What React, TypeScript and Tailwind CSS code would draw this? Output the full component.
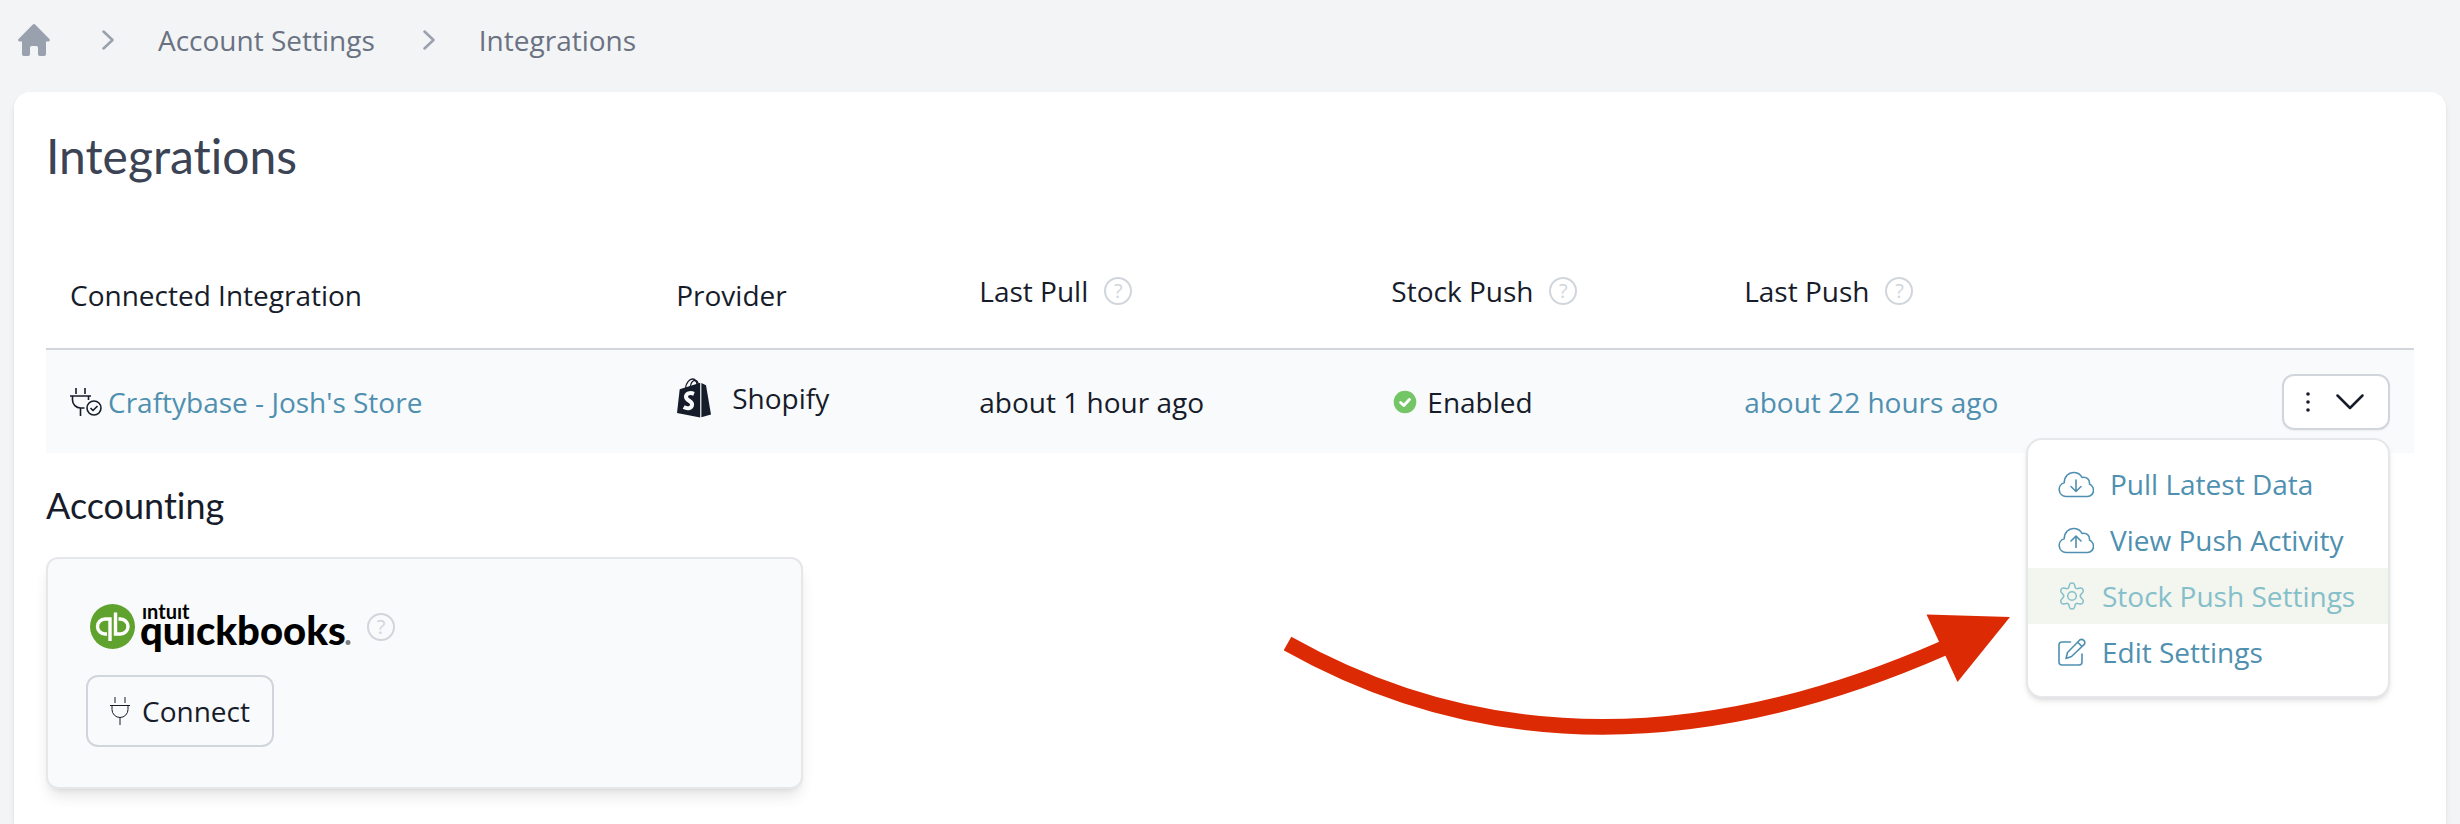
import { useState } from 'react'
import type { ReactNode } from 'react'

const iconProps = {
  fill: 'none',
  stroke: 'currentColor',
  strokeLinecap: 'round' as const,
  strokeLinejoin: 'round' as const,
}

function HomeIcon() {
  return (
    <svg className="h-8 w-8" viewBox="0 0 32 32" fill="currentColor" aria-hidden="true">
      <path d="M14.600.700a2 2 0 0 1 2.800 0l14 14.200a1.500 1.500 0 0 1-1 2.600h-2.400v12.700a1.800 1.800 0 0 1-1.800 1.800h-4.400a1.800 1.800 0 0 1-1.800-1.800V23.500a1.600 1.600 0 0 0-1.600-1.600h-4.800a1.600 1.600 0 0 0-1.600 1.600v6.700a1.800 1.800 0 0 1-1.800 1.800H5.800A1.800 1.800 0 0 1 4 30.200V17.500H1.600a1.500 1.500 0 0 1-1-2.600z" />
    </svg>
  )
}

function BreadcrumbArrow() {
  return (
    <svg className="h-5 w-5 text-gray-400" viewBox="0 0 20 20" strokeWidth="2.500" {...iconProps} aria-hidden="true">
      <path d="m5.500 1.500 9 8.500-9 8.500" />
    </svg>
  )
}

function PlugCheckIcon() {
  return (
    <svg className="h-8 w-8 shrink-0" viewBox="0 0 32 32" strokeWidth="1.600" {...iconProps} strokeLinecap="butt" aria-hidden="true">
      <path d="M6 2v6M15 2v6M0 10h21M18.500 10v4M2.500 10v4a8 8 0 0 0 8 8h4M10.500 22v8" />
      <circle cx="24" cy="22" r="7" />
      <path d="m20.500 22 2.500 2.500 4.500-4.500" />
    </svg>
  )
}

function PlugIcon() {
  return (
    <svg className="h-7 w-5" viewBox="0 0 20 28" strokeWidth="1" {...iconProps} strokeLinecap="butt" aria-hidden="true">
      <path d="M5 0v6M15 0v6M0 8.500h20M2 8.500v4a8 8 0 0 0 16 0v-4M10 21v7" />
    </svg>
  )
}

function ShopifyIcon() {
  return (
    <svg className="h-10 w-9" viewBox="0 0 36 40" aria-hidden="true">
      <g fill="#171c2b">
        <path d="M3.700 11.300 24.200 4.700v34.800L1 35z" />
        <path d="m25.400 5 4.600 2.300L35 36.500 25.400 39.300z" />
      </g>
      <g fill="none" stroke="#171c2b" strokeWidth="1.300">
        <path d="M9.500 9.800C10.300 4.500 13.800 1 16.300 1s4.200 2 4.700 5.200" />
        <path d="M14.300 8.500c.7-3.700 2.900-6 4.600-6s2.900 1.400 3.300 3.600" />
      </g>
      <path fill="none" stroke="#f9fafb" strokeWidth="4" d="M18 15.800c-4-1.500-7.800-.4-8 2.900-.1 4.100 6.400 4 6.100 8-.2 3.500-4.400 4.700-8.400 2.400" />
    </svg>
  )
}

function CheckCircleIcon() {
  return (
    <svg className="h-7 w-7" viewBox="0 0 28 28" aria-hidden="true">
      <circle cx="14" cy="14" r="11.300" fill="#73c565" />
      <path fill="none" stroke="#fff" strokeWidth="3" strokeLinecap="round" strokeLinejoin="round" d="m9.600 14.500 3.200 3 5.600-6" />
    </svg>
  )
}

function CloudIcon({ direction }: { direction: 'down' | 'up' }) {
  return (
    <svg className="h-7 w-9" viewBox="0 0 36 28" strokeWidth="1.600" {...iconProps} aria-hidden="true">
      <path d="M8 26.500a7 7 0 0 1-1.800-13.700C6.300 6.500 10.500 2.500 15.500 2.500c4 0 7 2 8.500 5 4.500-1.200 8 2 7.500 6.500 2.500 1.300 4 3.600 4 6.200 0 3.500-2.600 6.300-6 6.300z" />
      {direction === 'down' ? (
        <path d="M18 10v11M13 16.500l5 5 5-5" />
      ) : (
        <path d="M18 21.500v-11M13 15l5-5 5 5" />
      )}
    </svg>
  )
}

function GearIcon() {
  return (
    <svg className="h-7 w-7" viewBox="0 -1 28 28" strokeWidth="1.500" {...iconProps} aria-hidden="true">
      <path d="M11.500 1.600c.6-2.200 4.400-2.200 5 0l.6 2.400c.3 1.200 1.500 1.900 2.600 1.600l2.500-.6c2.300-.5 4.100 2.700 2.500 4.400l-1.700 1.900c-.8.900-.8 2.500 0 3.400l1.700 1.900c1.600 1.700-.2 4.900-2.500 4.400l-2.500-.6c-1.100-.3-2.300.4-2.600 1.600l-.6 2.400c-.6 2.200-4.400 2.200-5 0l-.6-2.400c-.3-1.200-1.500-1.900-2.600-1.600l-2.500.6c-2.300.5-4.100-2.700-2.500-4.400l1.700-1.900c.8-.9.8-2.500 0-3.400L3.300 9.400C1.700 7.700 3.500 4.500 5.800 5l2.500.6c1.100.3 2.300-.4 2.600-1.600z" />
      <circle cx="14" cy="13" r="4.300" />
    </svg>
  )
}

function EditIcon() {
  return (
    <svg className="h-7 w-7" viewBox="0 0 28 28" strokeWidth="1.600" {...iconProps} aria-hidden="true">
      <path d="M12.500 4H4a3 3 0 0 0-3 3v17a3 3 0 0 0 3 3h17a3 3 0 0 0 3-3v-8" />
      <path d="M21.500 2.200a3.200 3.200 0 0 1 4.500 4.500L13.500 18.500 8 20.500 9.500 14.500zM19.500 4l4.500 4.500" />
    </svg>
  )
}

function HelpButton({ label }: { label: string }) {
  return (
    <button
      type="button"
      aria-label={label}
      className="flex h-7 w-7 items-center justify-center rounded-full border-2 border-gray-300 text-xl leading-none text-gray-300"
    >
      ?
    </button>
  )
}

function QuickbooksLogo() {
  return (
    <svg className="h-14 w-[265px]" viewBox="0 0 265 56" role="img" aria-label="Intuit QuickBooks">
      <circle cx="26.500" cy="27.500" r="22.500" fill="#60a22e" />
      <g fill="none" stroke="#fff" strokeWidth="3.400">
        <path d="M24 42V20h-5a7.500 7.500 0 0 0 0 15h2" />
        <path d="M29.500 13.500V35h5a7.500 7.500 0 0 0 0-15h-2" />
      </g>
      <g className="font-['Lato',sans-serif]">
        <text x="56" y="20" className="text-xl font-bold">
          ıntuıt
        </text>
        <text x="54" y="46" className="text-[40px] font-black">
          quıckbooks
        </text>
      </g>
      <circle cx="262" cy="43.500" r="2.500" fill="#808080" />
    </svg>
  )
}

function PointerArrow() {
  return (
    <svg
      className="pointer-events-none absolute top-[176px] right-full mr-4 h-[122px] w-[726px]"
      viewBox="1284 614 726 122"
      aria-hidden="true"
    >
      <path d="M1287.500 643.500Q1580 808 1944 648" fill="none" stroke="#dc2b04" strokeWidth="15.500" />
      <path d="M1926.500 614.500 2010 617 1957.500 682z" fill="#dc2b04" />
    </svg>
  )
}

const menuItems: { label: string; icon: ReactNode; active?: boolean }[] = [
  { label: 'Pull Latest Data', icon: <CloudIcon direction="down" /> },
  { label: 'View Push Activity', icon: <CloudIcon direction="up" /> },
  { label: 'Stock Push Settings', icon: <GearIcon />, active: true },
  { label: 'Edit Settings', icon: <EditIcon /> },
]

function ActionsMenu() {
  const [isOpen, setIsOpen] = useState(true)

  return (
    <div className="relative">
      <button
        type="button"
        aria-label="Actions"
        aria-expanded={isOpen}
        onClick={() => setIsOpen(!isOpen)}
        className="flex h-14 items-center gap-6 rounded-xl border-2 border-gray-300 bg-white pr-6 pl-5 shadow-xs"
      >
        <svg className="h-5 w-2" viewBox="0 0 8 20" fill="currentColor" aria-hidden="true">
          <circle cx="4" cy="2" r="1.800" />
          <circle cx="4" cy="10" r="1.800" />
          <circle cx="4" cy="18" r="1.800" />
        </svg>
        <svg className="h-4 w-7" viewBox="0 0 28 16" strokeWidth="2.500" {...iconProps} aria-hidden="true">
          <path d="m1.500 1.500 12.500 12.500 12.500-12.500" />
        </svg>
      </button>

      {isOpen && (
        <div className="absolute top-full right-0 z-10 mt-2">
          <ul className="w-[364px] rounded-2xl border-2 border-gray-200 bg-white py-4 whitespace-nowrap shadow-md">
            {menuItems.map((item) => (
              <li key={item.label}>
                <a
                  href="#"
                  className={
                    item.active
                      ? 'flex h-14 items-center gap-4 bg-[#f3f5ef] px-[30px] text-[#85bfca]'
                      : 'flex h-14 items-center gap-4 px-[30px] text-[#4f90b0]'
                  }
                >
                  {item.icon}
                  {item.label}
                </a>
              </li>
            ))}
          </ul>
          <PointerArrow />
        </div>
      )}
    </div>
  )
}

export default function App() {
  return (
    <div className="flex min-h-screen flex-col bg-gray-100 px-3.5 font-['Open_Sans',sans-serif] text-[28px] leading-10 text-[#171c2b]">
      {/* Breadcrumb */}
      <nav aria-label="Breadcrumb" className="h-[92px] text-gray-500">
        <ol className="flex h-20 items-center gap-11 pl-1">
          <li className="w-9">
            <a href="#" aria-label="Home" className="text-gray-400">
              <HomeIcon />
            </a>
          </li>
          <li className="flex items-center gap-10">
            <BreadcrumbArrow />
            <a href="#">Account Settings</a>
          </li>
          <li className="flex items-center gap-10">
            <BreadcrumbArrow />
            <a href="#">Integrations</a>
          </li>
        </ol>
      </nav>

      <main className="flex-1 rounded-t-2xl bg-white px-8 pt-9 shadow-md">
        <h1 className="font-['Lato',sans-serif] text-5xl leading-14 text-[#3b4354] [font-variant-ligatures:none]">
          Integrations
        </h1>

        {/* Connected integrations */}
        <table className="mt-[57px] w-full table-fixed text-left">
          <thead>
            <tr className="h-[108px] border-b-2 border-gray-300">
              <th className="w-[25.6%] px-6 font-normal">Connected Integration</th>
              <th className="w-[12.8%] px-6 font-normal">Provider</th>
              <th className="w-[17.4%] px-6 font-normal">
                <div className="mb-2 flex items-center gap-4">
                  Last Pull <HelpButton label="About last pull" />
                </div>
              </th>
              <th className="w-[14.9%] px-6 font-normal">
                <div className="mb-2 flex items-center gap-4">
                  Stock Push <HelpButton label="About stock push" />
                </div>
              </th>
              <th className="px-6 font-normal">
                <div className="mb-2 flex items-center gap-4">
                  Last Push <HelpButton label="About last push" />
                </div>
              </th>
            </tr>
          </thead>
          <tbody>
            <tr className="h-[104px] bg-gray-50">
              <td className="px-6">
                <div className="flex items-center gap-1.5">
                  <PlugCheckIcon />
                  <a href="#" className="text-[#4f90b0]">
                    Craftybase - Josh's Store
                  </a>
                </div>
              </td>
              <td className="px-6">
                <div className="mb-2 flex items-center gap-5">
                  <ShopifyIcon />
                  Shopify
                </div>
              </td>
              <td className="px-6">about 1 hour ago</td>
              <td className="px-6">
                <div className="flex items-center gap-2">
                  <CheckCircleIcon />
                  Enabled
                </div>
              </td>
              <td className="px-6">
                <div className="flex items-center justify-between">
                  <a href="#" className="text-[#4f90b0]">
                    about 22 hours ago
                  </a>
                  <ActionsMenu />
                </div>
              </td>
            </tr>
          </tbody>
        </table>

        {/* Accounting */}
        <h2 className="mt-8 font-['Lato',sans-serif] text-4xl leading-10 [font-variant-ligatures:none]">Accounting</h2>
        <div className="mt-8 grid grid-cols-3 gap-12">
          <section className="h-[232px] rounded-xl border-2 border-gray-200 bg-gray-50 px-[38px] py-10 shadow-lg">
            <div className="flex items-center gap-4">
              <QuickbooksLogo />
              <HelpButton label="About QuickBooks" />
            </div>
            <button
              type="button"
              className="mt-5 flex h-[72px] items-center gap-3 rounded-xl border-2 border-gray-300 px-[22px]"
            >
              <PlugIcon />
              Connect
            </button>
          </section>
        </div>
      </main>
    </div>
  )
}
